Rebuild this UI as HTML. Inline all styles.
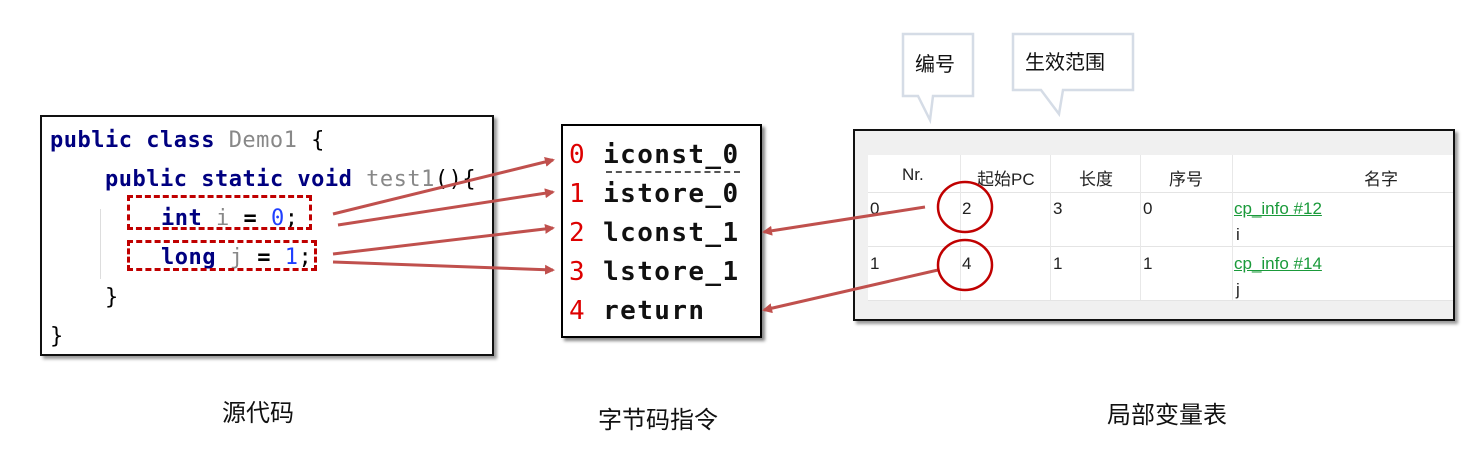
<!DOCTYPE html>
<html><head><meta charset="utf-8"><style>
body{margin:0;width:1482px;height:466px;background:#fff;position:relative;overflow:hidden;font-family:"Liberation Sans","Noto Sans CJK SC",sans-serif}
.a{position:absolute}
.code{left:40px;top:115px;width:450px;height:237px;border:2px solid #111;box-shadow:3px 3px 3px #999;background:#fff}
.cl{position:absolute;font-family:"DejaVu Sans Mono","Liberation Mono",monospace;font-size:22px;letter-spacing:0.5px;font-weight:bold;color:#000080;white-space:pre;line-height:26px}
.g{color:#888;font-weight:normal}.b{color:#1f3fff;font-weight:normal}.k{color:#000}
.bc{left:561px;top:124px;width:197px;height:210px;border:2px solid #000;box-shadow:3px 3px 3px #888;background:#fff}
.bl{position:absolute;left:6px;font-family:"DejaVu Sans Mono","Liberation Mono",monospace;font-size:26px;letter-spacing:1.4px;font-weight:bold;white-space:pre;line-height:30px;color:#111}
.bl span{color:#d00;font-weight:normal}
.tb{left:853px;top:129px;width:598px;height:188px;border:2px solid #111;background:#f0f0f0;box-shadow:3px 3px 3px #999}
.tbl{position:absolute;left:13px;top:24px;width:585px;height:146px;background:#fff}
.c{position:absolute;font-size:17px;color:#222}
.lnk{color:#1a9a3a;text-decoration:underline}
.lab{font-size:24px;color:#111}
.co{font-size:20px;color:#111}
</style></head><body>
<div class="a code">
<div class="cl" style="left:8px;top:11px">public class <span class="g">Demo1</span> <span class="k" style="font-weight:normal">{</span></div>
<div class="cl" style="left:63px;top:50px">public static void <span class="g">test1</span><span class="k" style="font-weight:normal">(){</span></div>
<div class="cl" style="left:119px;top:89px">int <span class="g">i</span> <span class="k">=</span> <span class="b">0</span><span class="k" style="font-weight:normal">;</span></div>
<div class="cl" style="left:119px;top:128px">long <span class="g">j</span> <span class="k">=</span> <span class="b">1</span><span class="k" style="font-weight:normal">;</span></div>
<div class="cl k" style="left:63px;top:168px;font-weight:normal">}</div>
<div class="cl k" style="left:8px;top:207px;font-weight:normal">}</div>
<div class="a" style="left:58px;top:92px;width:0;height:70px;border-left:1px solid #ddd"></div>
</div>
<div class="a" style="left:127px;top:195px;width:185px;height:35px;border:3px dashed #c00000;box-sizing:border-box"></div>
<div class="a" style="left:127px;top:240px;width:190px;height:31px;border:3px dashed #c00000;box-sizing:border-box"></div>

<div class="a bc">
<div class="bl" style="top:14px"><span>0</span> iconst_0</div>
<div class="bl" style="top:53px"><span>1</span> istore_0</div>
<div class="bl" style="top:92px"><span>2</span> lconst_1</div>
<div class="bl" style="top:131px"><span>3</span> lstore_1</div>
<div class="bl" style="top:170px"><span>4</span> return</div>
<div class="a" style="left:43px;top:45px;width:134px;border-top:2px dashed #555"></div>
</div>

<div class="a tb"><div class="tbl">
<div class="a" style="left:0;top:37px;width:585px;border-top:1px solid #e4e4e4"></div>
<div class="a" style="left:0;top:91px;width:585px;border-top:1px solid #e4e4e4"></div>
<div class="a" style="left:0;top:145px;width:585px;border-top:1px solid #e4e4e4"></div>
<div class="a" style="left:92px;top:0;height:145px;border-left:1px solid #e8e8e8"></div>
<div class="a" style="left:182px;top:0;height:145px;border-left:1px solid #e8e8e8"></div>
<div class="a" style="left:272px;top:0;height:145px;border-left:1px solid #e8e8e8"></div>
<div class="a" style="left:364px;top:0;height:145px;border-left:1px solid #e8e8e8"></div>
<div class="c" style="left:34px;top:10px">Nr.</div>
<div class="c" style="left:109px;top:10px">起始PC</div>
<div class="c" style="left:211px;top:10px">长度</div>
<div class="c" style="left:301px;top:10px">序号</div>
<div class="c" style="left:496px;top:10px">名字</div>
<div class="c" style="left:2px;top:44px">0</div><div class="c" style="left:94px;top:44px">2</div><div class="c" style="left:185px;top:44px">3</div><div class="c" style="left:275px;top:44px">0</div>
<div class="c lnk" style="left:366px;top:44px">cp_info #12</div><div class="c" style="left:368px;top:70px">i</div>
<div class="c" style="left:2px;top:99px">1</div><div class="c" style="left:94px;top:99px">4</div><div class="c" style="left:185px;top:99px">1</div><div class="c" style="left:275px;top:99px">1</div>
<div class="c lnk" style="left:366px;top:99px">cp_info #14</div><div class="c" style="left:368px;top:125px">j</div>
</div></div>

<svg class="a" style="left:0;top:0" width="1482" height="466">
<defs><marker id="m" markerWidth="10" markerHeight="10" refX="8" refY="5" orient="auto" markerUnits="userSpaceOnUse"><path d="M0,0 L10,5 L0,10z" fill="#c0504d"/></marker></defs>
<g stroke="#c0504d" stroke-width="3" fill="none">
<line x1="333" y1="214" x2="553" y2="160" marker-end="url(#m)"/>
<line x1="338" y1="225" x2="553" y2="192" marker-end="url(#m)"/>
<line x1="333" y1="254" x2="553" y2="228" marker-end="url(#m)"/>
<line x1="333" y1="262" x2="553" y2="270" marker-end="url(#m)"/>
<line x1="925" y1="207" x2="764" y2="232" marker-end="url(#m)"/>
<line x1="938" y1="270" x2="764" y2="310" marker-end="url(#m)"/>
</g>
<ellipse cx="965" cy="207" rx="27" ry="25" fill="none" stroke="#c00000" stroke-width="2.5"/>
<ellipse cx="965" cy="265" rx="27" ry="25" fill="none" stroke="#c00000" stroke-width="2.5"/>
<path d="M903,34 H973 V96 H933 L930,120 L918,96 H903 Z" fill="#fff" stroke="#d5dce6" stroke-width="2.5"/>
<path d="M1013,34 H1133 V90 H1063 L1059,114 L1041,90 H1013 Z" fill="#fff" stroke="#d5dce6" stroke-width="2.5"/>
</svg>
<div class="a co" style="left:915px;top:48px">编号</div>
<div class="a co" style="left:1025px;top:46px">生效范围</div>
<div class="a lab" style="left:222px;top:393px">源代码</div>
<div class="a lab" style="left:598px;top:400px">字节码指令</div>
<div class="a lab" style="left:1107px;top:395px">局部变量表</div>
</body></html>
